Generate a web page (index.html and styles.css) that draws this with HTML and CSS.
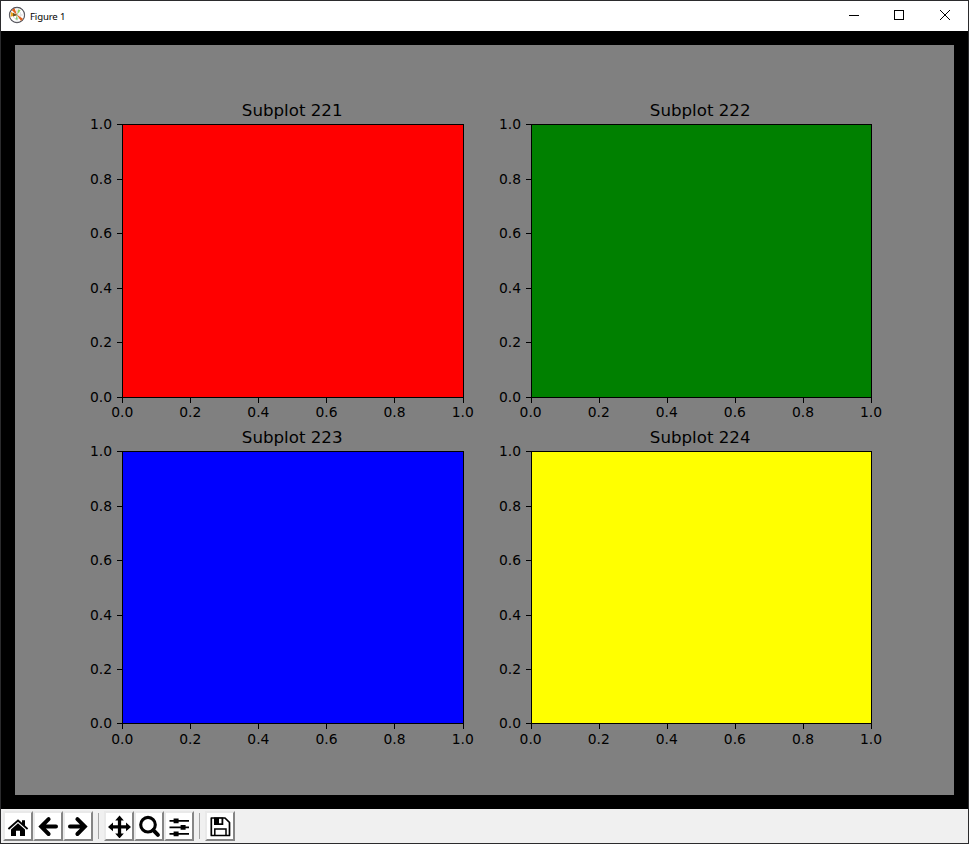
FILE: index.html
```html
<!DOCTYPE html>
<html lang="en">
<head>
<meta charset="utf-8">
<title>Figure 1</title>
<link rel="stylesheet" href="styles.css">
</head>
<body>
<div class="window">
  <header class="titlebar">
    <svg class="logo" width="18" height="18" viewBox="0 0 18 18">
      <circle cx="9" cy="9" r="7.6" fill="#fff" stroke="#4d4d55" stroke-width="1.1"/>
      <circle cx="9" cy="9" r="4" fill="none" stroke="#ccc" stroke-width=".6"/>
      <path d="M9 1.5V16.5M1.5 9H16.5" stroke="#ccc" stroke-width=".6"/>
      <path d="M9 9 3 6 2.5 10.8Z" fill="#e8a51c"/>
      <path d="M9 9 3.6 4 6.6 2.3Z" fill="#e2621b"/>
      <path d="M8.5 8.5 15 12.8 13 15Z" fill="#e2621b"/>
      <path d="M9 9 10.3 3.3 12.6 4.3Z" fill="#8ed05a"/>
      <path d="M9 9 7.4 13.4 9.7 13.7Z" fill="#80cf70"/>
      <path d="M5 7 9.5 9 5 10.5Z" fill="#675525"/>
    </svg>
    <span class="caption">Figure 1</span>
    <div class="controls">
      <svg width="46" height="30" viewBox="0 0 46 30"><path d="M18 14.5H28"/></svg>
      <svg width="46" height="30" viewBox="0 0 46 30"><path d="M17.5 9.5H26.5V18.5H17.5Z"/></svg>
      <svg width="45" height="30" viewBox="0 0 45 30"><path class="smooth" d="M17 9 27 19M27 9 17 19"/></svg>
    </div>
  </header>
  <main class="canvas">
    <div class="figure" id="figure"></div>
  </main>
  <footer class="toolbar">
    <button class="tool" aria-label="Home"><svg viewBox="0 0 24 24"><path d="M1.8 14.2 12 5.3 16 8.8V6.3H19V11.4L22.2 14.2 21 15.7 12 7.8 3 15.7Z"/><path d="M5 15.4 12 9.2 19 15.4V22H14V16.8H10V22H5Z"/></svg></button>
    <button class="tool" aria-label="Back"><svg viewBox="0 0 24 24"><path class="arrow" d="M20 12.6H7M12.6 5.2 5.2 12.6 12.6 20"/></svg></button>
    <button class="tool" aria-label="Forward"><svg viewBox="0 0 24 24"><path class="arrow" d="M4 12.6H17M11.4 5.2 18.8 12.6 11.4 20"/></svg></button>
    <span class="separator"></span>
    <button class="tool" aria-label="Pan"><svg viewBox="0 0 24 24"><path transform="translate(1 1.4) scale(.96)" d="M12 0 16.5 5.2H13.7V10.3H18.8V7.5L24 12 18.8 16.5V13.7H13.7V18.8H16.5L12 24 7.5 18.8H10.3V13.7H5.2V16.5L0 12 5.2 7.5V10.3H10.3V5.2H7.5Z"/></svg></button>
    <button class="tool" aria-label="Zoom"><svg viewBox="0 0 24 24"><circle class="line" cx="11" cy="10.7" r="7.3" stroke-width="3.1"/><path class="line" d="M16.3 16.2 20.9 20.8" stroke-width="4" stroke-linecap="round"/></svg></button>
    <button class="tool" aria-label="Configure subplots"><svg viewBox="0 0 24 24"><path d="M2.5 6H22V7.8H2.5ZM2.5 12.5H22V14.3H2.5ZM2.5 19H22V20.8H2.5Z"/><path d="M6.6 4.5H11.6V9.2H6.6ZM13.6 11H18.6V15.8H13.6ZM6.6 17.5H11.6V22.2H6.6Z"/></svg></button>
    <span class="separator"></span>
    <button class="tool" aria-label="Save"><svg viewBox="0 0 24 24"><path class="line" d="M3.3 4H17L21.5 8.5V21.5H3.3Z" stroke-width="1.7" stroke-linejoin="round"/><path d="M6 3.5H15.3V11H6Z"/><path d="M11 4.8H13.5V9.3H11Z" fill="#fff"/><path class="line" d="M6.8 21V14.9H18V21" stroke-width="1.5"/></svg></button>
  </footer>
</div>
<script src="script.js"></script>
</body>
</html>
```
FILE: styles.css
```css
* { box-sizing: border-box; }
body { margin: 0; }
.window {
  width: 969px;
  height: 844px;
  display: flex;
  flex-direction: column;
  border: 1px solid #2b2b2d;
  background: #f0f0f0;
}
.titlebar {
  height: 30px;
  flex: none;
  display: flex;
  align-items: center;
  background: #fff;
}
.logo { margin: -2px 4px 0 7px; }
.caption {
  font: 9.6px "Noto Sans", "Open Sans", sans-serif;
  color: #000;
  letter-spacing: -0.15px;
}
.controls {
  display: flex;
  margin-left: auto;
}
.controls path {
  fill: none;
  stroke: #000;
  stroke-width: 1;
  shape-rendering: crispEdges;
}
.controls .smooth { shape-rendering: auto; }
.canvas {
  height: 778px;
  flex: none;
  padding: 14px;
  background: #000;
}
.figure {
  width: 939px;
  height: 750px;
  padding: 79px 82px 71px 107px;
  display: grid;
  grid-template-columns: 342px 341px;
  grid-template-rows: 274px 273px;
  column-gap: 67px;
  row-gap: 53px;
  background: #808080;
}
.axes {
  display: block;
  overflow: visible;
  font-family: "DejaVu Sans", sans-serif;
}
.axes rect, .axes path {
  stroke: #000;
  stroke-width: 1;
  shape-rendering: crispEdges;
}
.tick { font-size: 13.89px; }
.title { font-size: 16.67px; text-anchor: middle; }
.xtick { text-anchor: middle; }
.ytick { text-anchor: end; }
.toolbar {
  flex: 1;
  display: flex;
  padding: 2px;
}
.tool {
  width: 30px;
  height: 30px;
  padding: 1px;
  border: 2px solid;
  border-color: #e9e9e9 #858585 #858585 #e9e9e9;
  background: #fff;
}
.tool svg { display: block; width: 24px; height: 24px; }
.arrow {
  fill: none;
  stroke: #000;
  stroke-width: 4;
  stroke-linecap: round;
}
.line { fill: none; stroke: #000; }
.separator {
  width: 1px;
  height: 26px;
  margin: 2px 5px;
  background: #a5a5a5;
}
```
FILE: script.js
```js
const subplots = [
  { title: "Subplot 221", color: "#ff0000", width: 341, height: 273, titleX: 170.2, labelY: 293, rows: [273, 218, 164, 109, 55, 0] },
  { title: "Subplot 222", color: "#008000", width: 340, height: 273, titleX: 169.2, labelY: 293, rows: [273, 218, 164, 109, 55, 0] },
  { title: "Subplot 223", color: "#0000ff", width: 341, height: 272, titleX: 170.2, labelY: 293, rows: [272, 218, 164, 109, 55, 0] },
  { title: "Subplot 224", color: "#ffff00", width: 340, height: 272, titleX: 169.2, labelY: 293, rows: [272, 218, 164, 109, 55, 0] }
];
const labels = ["0.0", "0.2", "0.4", "0.6", "0.8", "1.0"];

function axes({ title, color, width: w, height: h, titleX, labelY, rows }) {
  let ticks = "";
  let text = "";
  labels.forEach((label, i) => {
    const x = (i === 5 ? w : i * 68) + 0.5;
    const y = rows[i] + 0.5;
    const labelX = i * 68.1 + (w === 340 ? -0.4 : 0.2);
    ticks += `M${x} ${h + 1}v5M0 ${y}h-5`;
    text += `<text class="tick xtick" x="${labelX}" y="${labelY}">${label}</text>`;
    text += `<text class="tick ytick" x="-10" y="${rows[i] + 5}">${label}</text>`;
  });
  return `<svg class="axes" width="${w + 1}" height="${h + 1}">
    <rect x=".5" y=".5" width="${w}" height="${h}" fill="${color}"/>
    <path d="${ticks}"/>
    <text class="title" x="${titleX}" y="-8">${title}</text>${text}</svg>`;
}
document.getElementById("figure").innerHTML = subplots.map(axes).join("");
```
